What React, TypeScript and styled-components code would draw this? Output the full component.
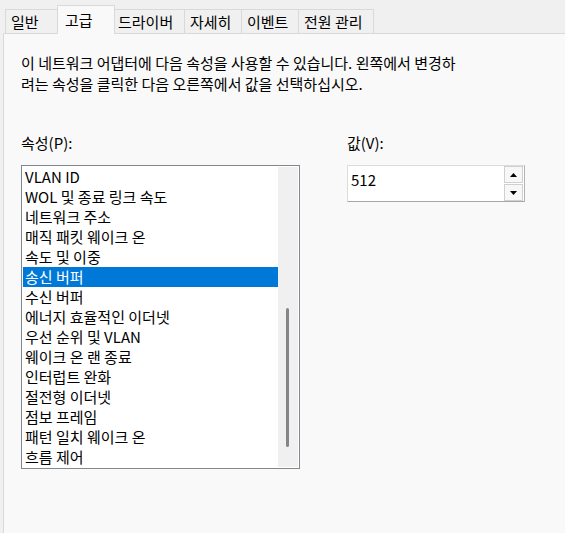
import React from "react";
import styled, { createGlobalStyle } from "styled-components";

const GlobalStyle = createGlobalStyle`
  html, body {
    margin: 0;
    padding: 0;
    background: #f0f0f0;
  }
  body {
    font-family: "Noto Sans CJK KR", "Noto Sans", sans-serif;
    font-size: 15px;
    color: #000;
  }
`;

const Window = styled.div`
  height: 533px;
  display: flex;
  flex-direction: column;
  overflow: hidden;
`;

const TabStrip = styled.div`
  height: 33px;
  flex-shrink: 0;
  display: flex;
  align-items: flex-end;
  padding-left: 5px;
`;

const Tab = styled.div<{ $w: number; $active?: boolean }>`
  box-sizing: border-box;
  width: ${(p) => (p.$active ? p.$w + 4 : p.$w)}px;
  height: ${(p) => (p.$active ? 29 : 24)}px;
  margin-left: ${(p) => (p.$active ? -3 : -1)}px;
  margin-right: ${(p) => (p.$active ? -2 : 0)}px;
  margin-bottom: ${(p) => (p.$active ? -1 : 0)}px;
  padding-left: ${(p) => (p.$active ? 7 : 5)}px;
  display: flex;
  align-items: center;
  border: 1px solid #d9d9d9;
  border-bottom: none;
  background: ${(p) => (p.$active ? "#f9f9f9" : "#f0f0f0")};
  position: relative;
  z-index: ${(p) => (p.$active ? 2 : 1)};
  white-space: nowrap;
  line-height: 20px;

  &:first-child {
    margin-left: 0;
  }
`;

const Panel = styled.div`
  flex: 1;
  margin-left: 3px;
  border-left: 1px solid #d9d9d9;
  border-top: 1px solid #d9d9d9;
  background: #f9f9f9;
  padding: 18px 0 0 17px;
`;

const Intro = styled.p`
  margin: 0;
  line-height: 21px;
  white-space: nowrap;
`;

const Columns = styled.div`
  display: flex;
  gap: 47px;
  margin-top: 39px;
`;

const Column = styled.div`
  display: flex;
  flex-direction: column;
`;

const Label = styled.div`
  line-height: 20px;
  margin-bottom: 12px;
`;

const ListBox = styled.div`
  box-sizing: border-box;
  width: 279px;
  height: 304px;
  border: 1px solid #828790;
  background: #fff;
  padding: 1px;
  display: flex;
`;

const Items = styled.div`
  flex: 1;
  display: flex;
  flex-direction: column;
`;

const Item = styled.div<{ $selected?: boolean }>`
  height: 20px;
  line-height: 20px;
  padding-left: 2px;
  white-space: nowrap;
  background: ${(p) => (p.$selected ? "#0078d7" : "transparent")};
  color: ${(p) => (p.$selected ? "#fff" : "#000")};
`;

const ScrollTrack = styled.div`
  width: 20px;
  background: #f0f0f0;
  display: flex;
  justify-content: center;
  padding: 141px 0 20px;
  box-sizing: border-box;
`;

const ScrollThumb = styled.div`
  width: 3px;
  margin-left: -2px;
  background: #858585;
  border-radius: 2px;
`;

const ValueBox = styled.div`
  box-sizing: border-box;
  width: 178px;
  height: 37px;
  border: 1px solid #dcdcdc;
  border-right-color: #b4b4b4;
  border-bottom-color: #a8a8a8;
  background: #fff;
  display: flex;
  padding: 0 1px 0 0;
`;

const ValueText = styled.div`
  flex: 1;
  padding-left: 3px;
  line-height: 28px;
`;

const Spin = styled.div`
  width: 19px;
  display: flex;
  flex-direction: column;
  gap: 1px;
`;

const SpinButton = styled.div`
  flex: 1;
  box-sizing: border-box;
  border: 1px solid #d0d0d0;
  background: #f7f7f7;
  display: flex;
  align-items: center;
  justify-content: center;
`;

const Arrow = ({ down }: { down?: boolean }) => (
  <svg width="7" height="4" viewBox="0 0 7 4">
    <polygon points={down ? "0,0 7,0 3.5,4" : "0,4 7,4 3.5,0"} fill="#000" />
  </svg>
);

const tabs = [
  { label: "일반", w: 55 },
  { label: "고급", w: 54, active: true },
  { label: "드라이버", w: 73 },
  { label: "자세히", w: 58 },
  { label: "이벤트", w: 58 },
  { label: "전원 관리", w: 76 },
];

const properties = [
  "VLAN ID",
  "WOL 및 종료 링크 속도",
  "네트워크 주소",
  "매직 패킷 웨이크 온",
  "속도 및 이중",
  "송신 버퍼",
  "수신 버퍼",
  "에너지 효율적인 이더넷",
  "우선 순위 및 VLAN",
  "웨이크 온 랜 종료",
  "인터럽트 완화",
  "절전형 이더넷",
  "점보 프레임",
  "패턴 일치 웨이크 온",
  "흐름 제어",
];

export default function App() {
  return (
    <Window>
      <GlobalStyle />
      <TabStrip>
        {tabs.map((t) => (
          <Tab key={t.label} $w={t.w} $active={t.active}>
            {t.label}
          </Tab>
        ))}
      </TabStrip>
      <Panel>
        <Intro>
          이 네트워크 어댑터에 다음 속성을 사용할 수 있습니다. 왼쪽에서 변경하
          <br />
          려는 속성을 클릭한 다음 오른쪽에서 값을 선택하십시오.
        </Intro>
        <Columns>
          <Column>
            <Label>속성(P):</Label>
            <ListBox>
              <Items>
                {properties.map((p) => (
                  <Item key={p} $selected={p === "송신 버퍼"}>
                    {p}
                  </Item>
                ))}
              </Items>
              <ScrollTrack>
                <ScrollThumb />
              </ScrollTrack>
            </ListBox>
          </Column>
          <Column>
            <Label>값(V):</Label>
            <ValueBox>
              <ValueText>512</ValueText>
              <Spin>
                <SpinButton>
                  <Arrow />
                </SpinButton>
                <SpinButton>
                  <Arrow down />
                </SpinButton>
              </Spin>
            </ValueBox>
          </Column>
        </Columns>
      </Panel>
    </Window>
  );
}
